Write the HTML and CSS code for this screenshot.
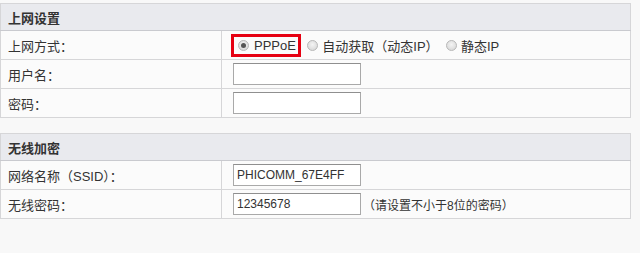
FILE: index.html
```html
<!DOCTYPE html>
<html lang="zh-CN">
<head>
    <meta charset="UTF-8">
    <title>上网设置</title>
    <link rel="stylesheet" href="styles.css">
</head>
<body>
    <table class="panel">
        <tr class="panel-head"><th colspan="2">上网设置</th></tr>
        <tr>
            <td class="label">上网方式：</td>
            <td class="field">
                <span class="option picked"><span class="radio on"></span>PPPoE</span>
                <span class="option"><span class="radio"></span>自动获取（动态IP）</span>
                <span class="option"><span class="radio"></span>静态IP</span>
            </td>
        </tr>
        <tr>
            <td class="label">用户名：</td>
            <td class="field"><input class="text-box" type="text"></td>
        </tr>
        <tr>
            <td class="label">密码：</td>
            <td class="field"><input class="text-box" type="password"></td>
        </tr>
    </table>

    <table class="panel">
        <tr class="panel-head"><th colspan="2">无线加密</th></tr>
        <tr>
            <td class="label">网络名称（SSID）：</td>
            <td class="field"><input class="text-box" type="text" value="PHICOMM_67E4FF"></td>
        </tr>
        <tr>
            <td class="label">无线密码：</td>
            <td class="field"><input class="text-box" type="text" value="12345678"><span class="hint">（请设置不小于8位的密码）</span></td>
        </tr>
    </table>
</body>
</html>
```

FILE: styles.css
```css
* {
    box-sizing: border-box;
}

body {
    margin: 0;
    padding-top: 3px;
    background-color: #f8f8f8;
    color: #333;
    font-family: "Liberation Sans", "Noto Sans CJK SC", sans-serif;
    font-size: 12px;
}

.panel {
    width: 631px;
    border-collapse: collapse;
    border: 1px solid #cfcfd2;
    background-color: #fbfbfb;
    margin-bottom: 15px;
}

.panel td,
.panel th {
    border: 1px solid #d6d6d8;
    padding: 0 0 0 7px;
    height: 29px;
    vertical-align: middle;
}

.panel-head th {
    background-color: #e9eaee;
    text-align: left;
    font-weight: bold;
    height: 27px;
    font-size: 13px;
    border-bottom-color: #c9cacf;
}

.label {
    width: 221px;
    font-size: 13px;
}

.field {
    padding-left: 11px !important;
}

.field .option {
    display: inline-flex;
    align-items: center;
    gap: 4px;
    margin-right: 4px;
    font-size: 13px;
    height: 23px;
    vertical-align: middle;
}

.field .option.picked {
    padding: 0 2px 0 4px;
    border: 3px solid #e60012;
    margin-left: -2px;
    margin-right: 3px;
    gap: 5px;
}

.radio {
    width: 11px;
    height: 11px;
    border-radius: 50%;
    border: 1px solid #b9b9b9;
    background: radial-gradient(circle at 50% 40%, #f4f4f4, #d2d2d2);
    position: relative;
}

.radio.on::after {
    content: "";
    position: absolute;
    left: 2px;
    top: 2px;
    width: 5px;
    height: 5px;
    border-radius: 50%;
    background-color: #555;
}

.text-box {
    width: 128px;
    height: 22px;
    border: 1px solid #a9a9a9;
    border-top-color: #8f8f8f;
    background-color: #fff;
    padding: 0 3px;
    font-family: "Liberation Sans", "Noto Sans CJK SC", sans-serif;
    font-size: 12px;
    color: #333;
    vertical-align: middle;
}

.hint {
    margin-left: 2px;
    font-size: 12px;
    vertical-align: middle;
}
```
